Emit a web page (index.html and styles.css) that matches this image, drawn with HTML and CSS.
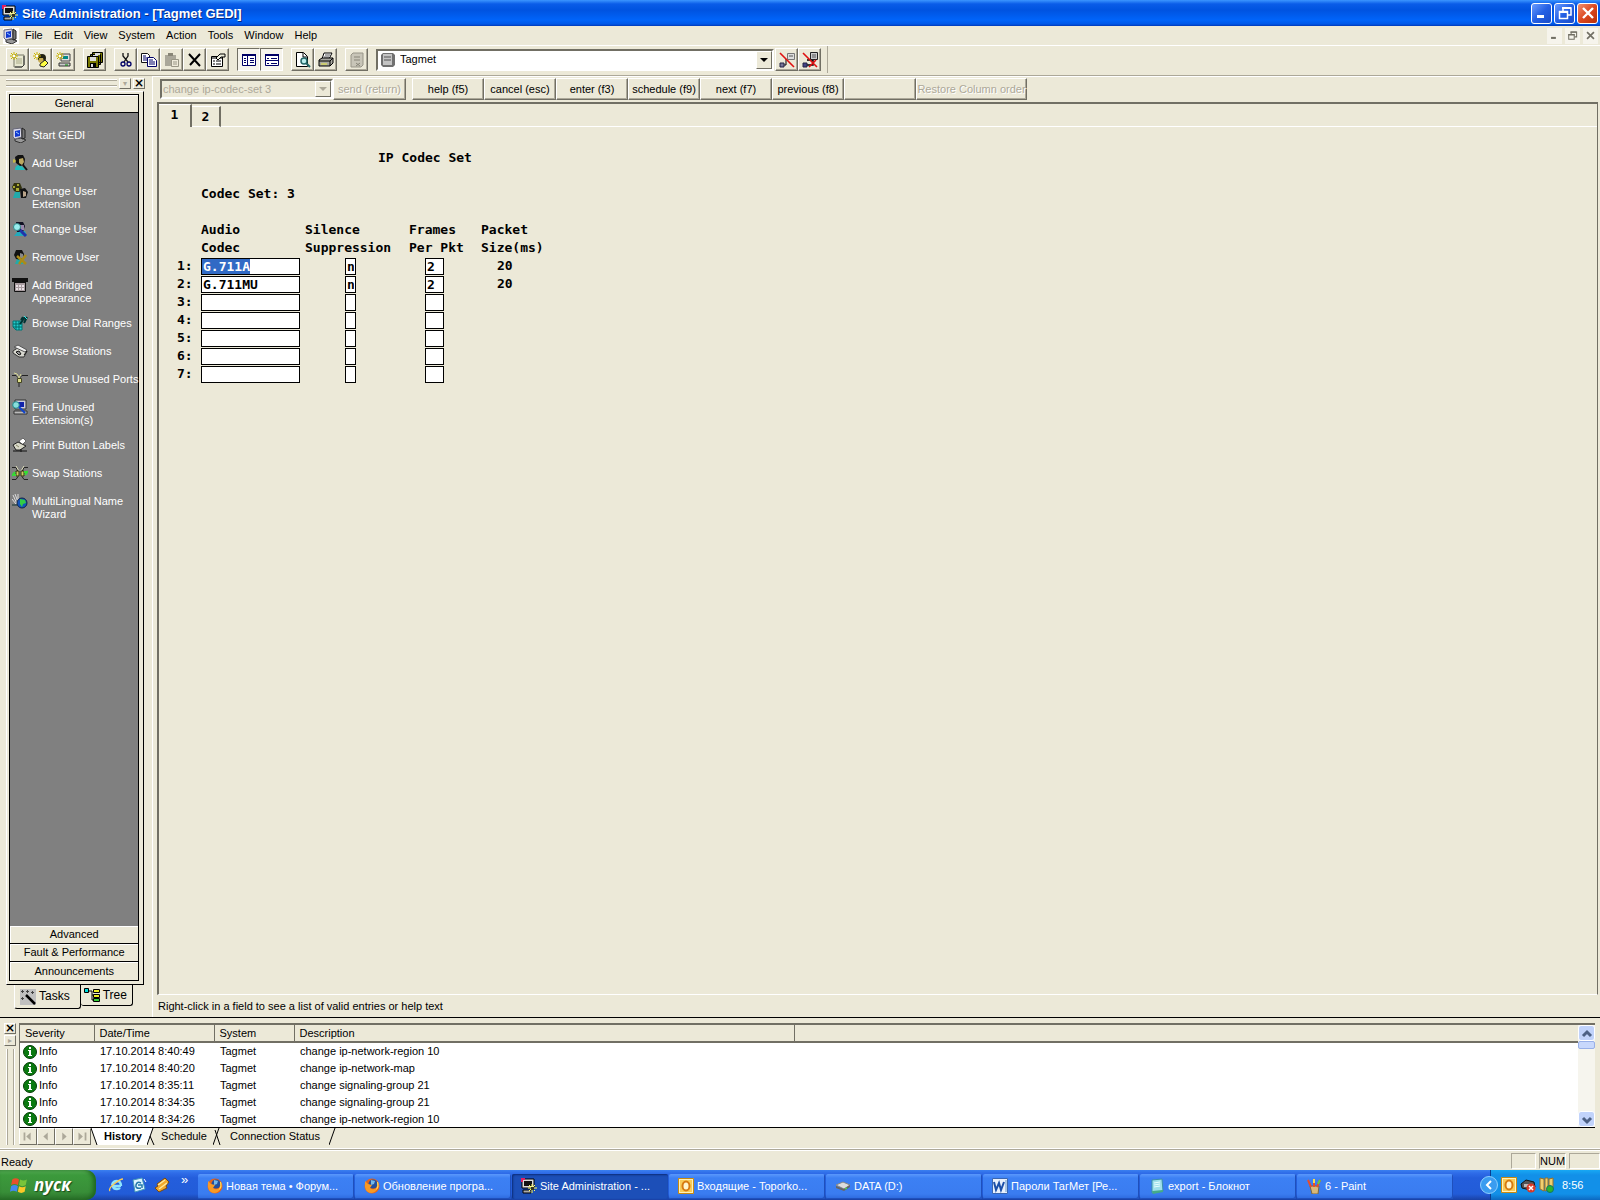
FILE: index.html
```html
<!DOCTYPE html>
<html lang="en">
<head>
<meta charset="utf-8">
<title>Site Administration - [Tagmet GEDI]</title>
<link rel="stylesheet" href="styles.css">
</head>
<body>
<svg class="defs" aria-hidden="true">
  <defs>
    <symbol id="pc" viewBox="0 0 16 16"><path d="M3 12l6-1 5 2-5 3-6-2z" fill="#999" stroke="#333"/><path d="M1 2l8-1 1 9-7 2-2-2z" fill="#d8d8e8" stroke="#667"/><path d="M3 4l5-1v6l-5 1z" fill="#1038d0"/><path d="M4 5l3 2" stroke="#9cf"/><path d="M10 1l3 2v8l-3 1z" fill="#777" stroke="#222"/></symbol>
    <symbol id="app" viewBox="0 0 16 16"><path d="M1 1h12v9H1z" fill="#ddd" stroke="#000"/><path d="M3 3h8v5H3z" fill="#111"/><path d="M0 0h4v2H2v2H0z" fill="#e02060"/><path d="M2 12h8v3H2z" fill="#aaa" stroke="#000"/><path d="M11 6v9M7 10h9M8 7l6 6M14 7l-6 6" stroke="#ff6"/><path d="M10 9h3v3h-3z" fill="#332"/></symbol>
    <symbol id="star" viewBox="0 0 16 16"><path d="M4 0v8M0 4h8M1 1l6 6M7 1L1 7" stroke="#c8b400"/><path d="M3 3h2v2H3z" fill="#fff"/></symbol>
    <symbol id="new1" viewBox="0 0 16 16"><path d="M4 3h10v10l-2 2H4z" fill="#e8e8d0" stroke="#776"/><path d="M6 7h6M6 9h6M6 11h6" stroke="#aa8"/><path d="M14 4v9l-2 2H5" fill="none" stroke="#333"/><use href="#star"/></symbol>
    <symbol id="new2" viewBox="0 0 16 16"><circle cx="9" cy="6" r="4" fill="#221"/><path d="M5 9l2-3h3l1 4-3 2z" fill="#c8ac50"/><path d="M7 12l5-4 3 3-4 4-4-1z" fill="#ff4" stroke="#222"/><use href="#star"/></symbol>
    <symbol id="new3" viewBox="0 0 16 16"><path d="M5 2h9v7H5z" fill="#ddd" stroke="#444"/><path d="M7 4h5v3H7z" fill="#088"/><path d="M3 11h11v3H3z" fill="#ccc" stroke="#333"/><path d="M9 13h3" stroke="#080"/><use href="#star"/></symbol>
    <symbol id="saveall" viewBox="0 0 16 16"><path d="M5.500.500h10v10h-10zM3.500 2.500h10v10h-10z" fill="#770" stroke="#000"/><path d="M.500 4.500h11v11H.500z" fill="#770" stroke="#000"/><path d="M3 5h6v4H3zM8 1h5v2H8zM6 3h5v1H6z" fill="#ddd"/><path d="M3 11h6v4H3z" fill="#000"/><path d="M4 12h2v3H4z" fill="#ddd"/></symbol>
    <symbol id="cut" viewBox="0 0 16 16"><path d="M5 1v3l5 6M10 1v3L6 10" fill="none" stroke="#111" stroke-width="1.300"/><circle cx="5" cy="12" r="2" fill="none" stroke="#006" stroke-width="1.300"/><circle cx="11" cy="12" r="2" fill="none" stroke="#006" stroke-width="1.300"/></symbol>
    <symbol id="copy" viewBox="0 0 16 16"><path d="M.500 1.500h6l2 2v7h-8z" fill="#fff" stroke="#111"/><path d="M6.500 5.500h6l3 3v6h-9z" fill="#fff" stroke="#006"/><path d="M2 4h3M2 6h4M2 8h4M8 8h4M8 10h6M8 12h6" stroke="#006"/></symbol>
    <symbol id="paste" viewBox="0 0 16 16"><path d="M1 3h11v11H1z" fill="#aaa79a"/><path d="M4 1h5v3H4z" fill="#888577"/><path d="M7.500 7.500h7v7h-7z" fill="#eeeada" stroke="#999686"/><path d="M9 10h4M9 12h4" stroke="#999686"/></symbol>
    <symbol id="del" viewBox="0 0 16 16"><path d="M2 2l11 12M13 2L3 13" stroke="#000" stroke-width="2"/></symbol>
    <symbol id="props" viewBox="0 0 16 16"><path d="M1.500 4.500h11v10h-11z" fill="#fff" stroke="#000"/><path d="M2 5h10v2H2z" fill="#777"/><path d="M3 9h2M6 9h5M3 12h2M6 12h5" stroke="#000"/><path d="M6 6l4-4h5v3h-4l-3 3z" fill="#eed" stroke="#000"/></symbol>
    <symbol id="view1" viewBox="0 0 16 16"><path d="M1.500 2.500h13v11h-13z" fill="#fff" stroke="#006"/><path d="M1 2h14v2H1zM6 2h1v11H6z" fill="#006"/><path d="M3 6.500h2M3 8.500h2M3 10.500h2M9 6.500h4M9 8.500h4M9 10.500h4" stroke="#006"/></symbol>
    <symbol id="view2" viewBox="0 0 16 16"><path d="M1.500 2.500h13v11h-13z" fill="#fff" stroke="#006"/><path d="M1 2h14v2H1zM1 8h14v1H1z" fill="#006"/><path d="M3 6.500h2M7 6.500h6M3 11.500h2M7 11.500h6" stroke="#006"/></symbol>
    <symbol id="preview" viewBox="0 0 16 16"><path d="M1.500.500h7l4 4v10h-11z" fill="#fff" stroke="#000"/><path d="M8 1v4h4" fill="none" stroke="#000"/><circle cx="9" cy="9" r="3" fill="#bee" stroke="#266" stroke-width="1.500"/><path d="M11 11l4 4" stroke="#266" stroke-width="2"/></symbol>
    <symbol id="print" viewBox="0 0 16 16"><path d="M6 1h8l-3 6H4z" fill="#fff" stroke="#000"/><path d="M7 3h5M6 5h5" stroke="#555"/><path d="M1 8l3-2h11v5l-3 3H1z" fill="#a8a8a0" stroke="#000"/><path d="M1 9h11v5M12 9l3-3" fill="none" stroke="#000"/><path d="M3 12h6" stroke="#ee4"/></symbol>
    <symbol id="sysoff" viewBox="0 0 16 16"><path d="M4 1h10v12l-2 2H2V3z" fill="#c8c5b8" stroke="#989588"/><path d="M5 5h6M5 8h6M7 11l4 3M7 14l4-3" stroke="#888578"/></symbol>
    <symbol id="server" viewBox="0 0 16 16"><path d="M3 1h10l2 2v10l-2 2H3l-2-2V3z" fill="#707070"/><path d="M3 2h9v11H3z" fill="#c4c4c4"/><path d="M4 5h7M4 8h7" stroke="#555"/></symbol>
    <symbol id="disc" viewBox="0 0 16 16"><path d="M3 13h4V7" fill="none" stroke="#000"/><path d="M8.500 1.500h7v6h-7z" fill="#ddd" stroke="#777"/><path d="M10 4h4" stroke="#555"/><path d="M1 11h4v4H1z" fill="#779" stroke="#224"/><path d="M1 1l13 13M14 14l1 1" stroke="#e01010" stroke-width="1.600"/></symbol>
    <symbol id="discall" viewBox="0 0 16 16"><path d="M4 13h7V8H5" fill="none" stroke="#000" stroke-width="1.500"/><path d="M8.500.500h7v7h-7z" fill="#ccc" stroke="#222"/><path d="M10 3h4M10 5h4" stroke="#555"/><path d="M1 11h4v4H1z" fill="#448" stroke="#224"/><path d="M1 1l14 14M14 8l-7 7" stroke="#e01010" stroke-width="1.600"/></symbol>
    <symbol id="head" viewBox="0 0 16 16"><path d="M3 15c0-4 2-5 5-5l4 3 1 2z" fill="#2bb"/><path d="M3 2l3-2h5l2 4-1 6-4 1-4-3z" fill="#111"/><path d="M7 4l4-1 1 4-2 3-3-2z" fill="#bca860"/><path d="M2 4v4M1 6h3" stroke="#dc3"/><path d="M11 10l4 5" stroke="#111" stroke-width="2"/></symbol>
    <symbol id="heads" viewBox="0 0 16 16"><path d="M2 0h6l2 5-3 5-5-2-2-4z" fill="#331"/><path d="M1 3h2v2H1zM5 1h2v2H5zM4 5h3v3H4z" fill="#aa3"/><path d="M1 15l2-6h5v6z" fill="#2aa"/><path d="M8 6l5-1 3 4-2 6H9z" fill="#111"/><path d="M11 8l3 1v4l-3 1z" fill="#b9a48a"/></symbol>
    <symbol id="heade" viewBox="0 0 16 16"><path d="M2 15l4-5h7l2 5z" fill="#2ab"/><path d="M4 1h7l2 4-2 6H5z" fill="#112"/><path d="M8 4h4v5H9z" fill="#98a"/><circle cx="5" cy="6" r="3.500" fill="#9ee" stroke="#388"/><path d="M8 9l6 6" stroke="#23a" stroke-width="3"/></symbol>
    <symbol id="headx" viewBox="0 0 16 16"><path d="M3 15l2-5h6v5z" fill="#2aa"/><path d="M4 1h6l2 4-2 6-6-1-2-4z" fill="#111"/><path d="M8 4l3 1v4l-3 1z" fill="#888"/><path d="M5 7l9 8M14 6l-7 9" stroke="#aa8b18" stroke-width="2.500"/></symbol>
    <symbol id="phone" viewBox="0 0 16 16"><path d="M0 1h16v4h-2V4H2v1H0z" fill="#111"/><path d="M2.500 4.500h11v10h-11z" fill="#a89ca0" stroke="#111"/><path d="M2 3h12v3H2z" fill="#111"/><path d="M4 8h2v2H4zM7 8h2v2H7zM10 8h2v2h-2zM4 11h2v2H4zM7 11h2v2H7zM10 11h2v2h-2z" fill="#e8e0e4"/></symbol>
    <symbol id="dial" viewBox="0 0 16 16"><path d="M1 6h9v9H4l-3-3z" fill="#2cc" stroke="#077"/><path d="M4 6v9M7 6v9M1 9h9M1 12h9" stroke="#066"/><path d="M8 9l5-7M9 5l2-3M12 8l3-6" stroke="#033" stroke-width="2"/><path d="M12 1l3 3" stroke="#3ee"/></symbol>
    <symbol id="desk" viewBox="0 0 16 16"><path d="M1 8l6-4 8 4-3 6H7l-6-4z" fill="#d8d8d0" stroke="#333"/><path d="M2 4l4-2 9 5-2 2z" fill="#eee" stroke="#555"/><path d="M4 9l3-1 2 3-2 1zM12 12l3-4" fill="#999" stroke="#111"/></symbol>
    <symbol id="plug" viewBox="0 0 16 16"><path d="M0 4.500h4l3 3 3-3h6" fill="none" stroke="#222"/><path d="M2 2l3 1 2 4 2-4" fill="none" stroke="#dd9"/><path d="M5.500 7.500h4v4h-4z" fill="#dd8" stroke="#442"/><path d="M7 12v4" stroke="#222"/></symbol>
    <symbol id="findpc" viewBox="0 0 16 16"><path d="M3 1h11v9H3z" fill="#ccd" stroke="#333"/><path d="M6 3h6v5H6z" fill="#12a"/><path d="M2 12h13v3H2z" fill="#bbb" stroke="#333"/><circle cx="4" cy="6" r="3.300" fill="#8dd" stroke="#288"/><path d="M7 8l6 6" stroke="#14c" stroke-width="2"/></symbol>
    <symbol id="label" viewBox="0 0 16 16"><path d="M7 4l4-3 3 3-4 4z" fill="#fff" stroke="#666"/><path d="M1 8l5-3 8 4-6 4H4z" fill="#d8d8c8" stroke="#222"/><path d="M1 14h14M9 12v3" stroke="#111"/><path d="M4 8l3 2" stroke="#886"/></symbol>
    <symbol id="swap" viewBox="0 0 16 16"><path d="M0 2.500h4l2 4M16 2.500h-4l-2 4M0 14.500h4l2-3M16 14.500h-4l-2-3" fill="none" stroke="#222"/><path d="M4 1l3 5M12 1L9 6" stroke="#ddb"/><path d="M4 6h3v5H4zM9 6h3v5H9z" fill="#cc6" stroke="#331"/><path d="M0 11l3-4M13 10l3-4M2 10h2M12 7h3" fill="none" stroke="#3d3" stroke-width="2"/></symbol>
    <symbol id="globe" viewBox="0 0 16 16"><path d="M1 2l4 9M3 1l3 8M6 1v6M0 6l4 5" stroke="#ddd"/><circle cx="10" cy="10" r="5" fill="#15b" stroke="#124"/><path d="M8 6l5 1 1 3-3 1-1 3-2-3z" fill="#3c4"/><path d="M0 12h5" stroke="#133"/></symbol>
    <symbol id="wand" viewBox="0 0 16 16"><path d="M0 0h16v16H0z" fill="#c0c0c0"/><path d="M6 6l9 9" stroke="#000" stroke-width="2.500"/><path d="M2.500 1v3M1 2.500h3M7.500 1v3M6 2.500h3M12.500 2v3M11 3.500h3M2.500 8v3M1 9.500h3" stroke="#444"/></symbol>
    <symbol id="tree" viewBox="0 0 16 16"><path d="M.500 1.500h4v4h-4z" fill="#0dd" stroke="#000"/><path d="M5 4h3v9h3M8 8h3" fill="none" stroke="#000"/><path d="M9.500 2.500h6v3h-6zM9.500 7.500h6v3h-6z" fill="#ee2" stroke="#000"/><path d="M9.500 11.500h6v3h-6z" fill="#3c3" stroke="#000"/></symbol>
    <symbol id="info" viewBox="0 0 16 16"><circle cx="8" cy="8" r="6.500" fill="#0a7a10" stroke="#043c06"/><path d="M7 3h2v2H7zM6 6h3v5h1v1H6v-1h1V7H6z" fill="#fff"/></symbol>
    <symbol id="win" viewBox="0 0 16 16"><path d="M2 3q3-2 6 0L7 8Q4 6 1 8z" fill="#e8502a"/><path d="M9 3q3 2 6 0l-1 5q-3 2-6 0z" fill="#78c43a"/><path d="M1 9q3-2 6 0l-1 5q-3-2-6 0z" fill="#4488f0"/><path d="M8 9q3 2 6 0l-1 5q-3 2-6 0z" fill="#fcc828"/></symbol>
    <symbol id="ie" viewBox="0 0 16 16"><path d="M13 9H5q0 3 4 3 2 0 3-1M4 8q1-4 5-4t4 5" fill="none" stroke="#8ce4ff" stroke-width="2.400"/><path d="M2 14q-2-2 4-7t9-5" fill="none" stroke="#fc5" stroke-width="1.300"/></symbol>
    <symbol id="outexp" viewBox="0 0 16 16"><path d="M2 3l9-2 3 11-10 3z" fill="#dff4ff" stroke="#49b"/><path d="M10 6q-4-2-5 2t5 3M7 8h4v3" fill="none" stroke="#27a" stroke-width="1.500"/><path d="M13 2l2 3" stroke="#fff"/></symbol>
    <symbol id="winamp" viewBox="0 0 16 16"><path d="M3 7l8-6 4 4-3 4 1 2-8 4-4-4 3-2z" fill="#f0a82c" stroke="#7a4810"/><path d="M4 8l7-5M5 12l8-6" stroke="#ffe89a" stroke-width="1.500"/></symbol>
    <symbol id="ff" viewBox="0 0 16 16"><circle cx="8" cy="8" r="7.500" fill="#e8641a"/><circle cx="9" cy="6" r="4.500" fill="#234f9c"/><path d="M7 2l4 1-1 3-3 1z" fill="#74b8e8"/><path d="M1 3l3 3 4 1-2 3q3 3 8-1-1 5-6 6-6 0-7-6z" fill="#f89a24"/><path d="M14 4q2 5-2 8 2-4 1-8z" fill="#fd5"/></symbol>
    <symbol id="outlook" viewBox="0 0 16 16"><path d="M.500.500h15v15H.500z" fill="#fff0b8" stroke="#c88a10"/><path d="M2 2h12v12H2z" fill="#f8cc58"/><ellipse cx="8" cy="8" rx="3.500" ry="4.500" fill="#fff6cc" stroke="#d67a10" stroke-width="2"/></symbol>
    <symbol id="drive" viewBox="0 0 16 16"><path d="M1 7l7-3 7 3-6 4z" fill="#ddd" stroke="#888"/><path d="M1 8l8 3v2l-8-3zM9 11l6-4v2l-6 4z" fill="#666"/><path d="M10 11l2-1" stroke="#4f4"/></symbol>
    <symbol id="word" viewBox="0 0 16 16"><path d="M.500.500h15v15H.500z" fill="#e8f0fc" stroke="#3a66b0"/><path d="M2 4l2 8 3-7 2 7 3-8" fill="none" stroke="#1b4fa8" stroke-width="2"/><path d="M14 2v12" stroke="#69c"/></symbol>
    <symbol id="note" viewBox="0 0 16 16"><path d="M3 2l10-1 1 12-11 2z" fill="#9fe0ea" stroke="#3a8fa8"/><path d="M5 5l6-1M5 7l6-1M5 9l6-1" stroke="#e8ffff"/><path d="M3 13l11-1v2L4 16z" fill="#4a8"/></symbol>
    <symbol id="paint" viewBox="0 0 16 16"><path d="M4 8h9l-1 8H6z" fill="#d8b878" stroke="#764"/><path d="M5 9L2 2M8 9V1M11 9l3-7" stroke="#e84c2c" stroke-width="2"/><path d="M8 5V1" stroke="#fd4" stroke-width="2"/><path d="M12 6l2-4" stroke="#6c4" stroke-width="2"/></symbol>
    <symbol id="netx" viewBox="0 0 16 16"><path d="M1 7l5-4 8 2 1 5-5 3-8-2z" fill="#555" stroke="#111"/><path d="M4 7h6v3H4z" fill="#bbb"/><circle cx="11" cy="11" r="4.500" fill="#d83a28"/><path d="M9 9l4 4M13 9l-4 4" stroke="#fff" stroke-width="1.500"/></symbol>
    <symbol id="books" viewBox="0 0 16 16"><path d="M1 1l4 1v12l-4-2zM6 1h3v12l-3 1zM10 2l4-1v11l-4 2z" fill="#f0cf70" stroke="#96702a"/><circle cx="11" cy="12" r="3.500" fill="#2db42d" stroke="#176"/></symbol>
    <symbol id="up" viewBox="0 0 16 16"><path d="M4 10l4-4 4 4" fill="none" stroke="#4d6185" stroke-width="3"/></symbol>
    <symbol id="down" viewBox="0 0 16 16"><path d="M4 6l4 4 4-4" fill="none" stroke="#4d6185" stroke-width="3"/></symbol>
    <symbol id="min" viewBox="0 0 16 16"><path d="M3 10h7v3H3z" fill="currentColor"/></symbol>
    <symbol id="restore" viewBox="0 0 16 16"><path d="M6 6V3h8v7h-3" fill="none" stroke="currentColor" stroke-width="1.500"/><path d="M2.500 6.500h8v7h-8z" fill="none" stroke="currentColor" stroke-width="1.500"/><path d="M5 3h9M2 7h9" stroke="currentColor" stroke-width="2"/></symbol>
    <symbol id="close" viewBox="0 0 16 16"><path d="M3 3l10 10M13 3L3 13" stroke="currentColor" stroke-width="2.400"/></symbol>
  </defs>
</svg>

<header class="titlebar">
  <svg class="icon"><use href="#app"/></svg>
  <h1>Site Administration - [Tagmet GEDI]</h1>
  <button class="winbtn" aria-label="Minimize"><svg class="icon"><use href="#min"/></svg></button>
  <button class="winbtn" aria-label="Restore"><svg class="icon"><use href="#restore"/></svg></button>
  <button class="winbtn danger" aria-label="Close"><svg class="icon"><use href="#close"/></svg></button>
</header>

<nav class="menubar" aria-label="Main menu">
  <svg class="icon docicon"><use href="#pc"/></svg>
  <button>File</button><button>Edit</button><button>View</button><button>System</button><button>Action</button><button>Tools</button><button>Window</button><button>Help</button>
  <div class="mdi">
    <button aria-label="Minimize document"><svg class="icon"><use href="#min"/></svg></button>
    <button aria-label="Restore document"><svg class="icon"><use href="#restore"/></svg></button>
    <button aria-label="Close document"><svg class="icon"><use href="#close"/></svg></button>
  </div>
</nav>

<div class="toolbar">
  <div class="group">
    <button aria-label="New task"><svg class="icon"><use href="#new1"/></svg></button>
    <button aria-label="New user"><svg class="icon"><use href="#new2"/></svg></button>
    <button aria-label="New system"><svg class="icon"><use href="#new3"/></svg></button>
  </div>
  <div class="group"><button aria-label="Save all"><svg class="icon"><use href="#saveall"/></svg></button></div>
  <div class="group">
    <button aria-label="Cut"><svg class="icon"><use href="#cut"/></svg></button>
    <button aria-label="Copy"><svg class="icon"><use href="#copy"/></svg></button>
    <button aria-label="Paste" disabled><svg class="icon"><use href="#paste"/></svg></button>
    <button aria-label="Delete"><svg class="icon"><use href="#del"/></svg></button>
    <button aria-label="Properties"><svg class="icon"><use href="#props"/></svg></button>
  </div>
  <div class="group">
    <button class="on" aria-label="Task pane"><svg class="icon"><use href="#view1"/></svg></button>
    <button class="on" aria-label="History pane"><svg class="icon"><use href="#view2"/></svg></button>
  </div>
  <div class="group">
    <button aria-label="Print preview"><svg class="icon"><use href="#preview"/></svg></button>
    <button aria-label="Print"><svg class="icon"><use href="#print"/></svg></button>
  </div>
  <div class="group"><button aria-label="Disconnect" disabled><svg class="icon"><use href="#sysoff"/></svg></button></div>
  <div class="combo system">
    <svg class="icon"><use href="#server"/></svg>
    <select aria-label="System"><option>Tagmet</option></select>
    <span class="drop"></span>
  </div>
  <div class="group last">
    <button aria-label="Drop connection"><svg class="icon"><use href="#disc"/></svg></button>
    <button aria-label="Drop all connections"><svg class="icon"><use href="#discall"/></svg></button>
  </div>
</div>

<div class="work">
  <aside class="side">
    <div class="grip"><span class="bars"></span><button class="tiny off" aria-label="Collapse">▾</button><button class="tiny" aria-label="Close pane">×</button></div>
    <div class="outer">
      <div class="accordion">
        <button class="head">General</button>
        <ul class="tasks">
          <li><svg class="icon"><use href="#pc"/></svg><a href="#">Start GEDI</a></li>
          <li><svg class="icon"><use href="#head"/></svg><a href="#">Add User</a></li>
          <li><svg class="icon"><use href="#heads"/></svg><a href="#">Change User<br>Extension</a></li>
          <li><svg class="icon"><use href="#heade"/></svg><a href="#">Change User</a></li>
          <li><svg class="icon"><use href="#headx"/></svg><a href="#">Remove User</a></li>
          <li><svg class="icon"><use href="#phone"/></svg><a href="#">Add Bridged<br>Appearance</a></li>
          <li><svg class="icon"><use href="#dial"/></svg><a href="#">Browse Dial Ranges</a></li>
          <li><svg class="icon"><use href="#desk"/></svg><a href="#">Browse Stations</a></li>
          <li><svg class="icon"><use href="#plug"/></svg><a href="#">Browse Unused Ports</a></li>
          <li><svg class="icon"><use href="#findpc"/></svg><a href="#">Find Unused<br>Extension(s)</a></li>
          <li><svg class="icon"><use href="#label"/></svg><a href="#">Print Button Labels</a></li>
          <li><svg class="icon"><use href="#swap"/></svg><a href="#">Swap Stations</a></li>
          <li><svg class="icon"><use href="#globe"/></svg><a href="#">MultiLingual Name<br>Wizard</a></li>
        </ul>
        <button class="head">Advanced</button>
        <button class="head">Fault &amp; Performance</button>
        <button class="head">Announcements</button>
      </div>
    </div>
    <div class="sidetabs">
      <button class="current"><svg class="icon"><use href="#wand"/></svg>Tasks</button>
      <button><svg class="icon"><use href="#tree"/></svg>Tree</button>
    </div>
  </aside>

  <main class="doc">
    <div class="cmdbar">
      <div class="combo command">
        <select aria-label="Command" disabled><option>change ip-codec-set 3</option></select>
        <span class="drop"></span>
      </div>
      <button class="send" disabled>send (return)</button>
      <button>help (f5)</button><button>cancel (esc)</button><button>enter (f3)</button><button>schedule (f9)</button><button>next (f7)</button><button>previous (f8)</button><button aria-label="Unassigned"></button>
      <button class="restore" disabled>Restore Column order</button>
    </div>
    <section class="sheet">
      <div class="pages"><button class="current">1</button><button>2</button><span class="rest"></span></div>
      <form class="term">
        <h2>IP Codec Set</h2>
        <p>Codec Set: 3</p>
        <table class="codecs">
          <thead><tr><th class="num"></th><th class="audio">Audio<br>Codec</th><th class="audio">Silence<br>Suppression</th><th class="frames">Frames<br>Per Pkt</th><th class="size">Packet<br>Size(ms)</th></tr></thead>
          <tbody>
            <tr><th>1:</th><td><input class="codec picked" aria-label="Audio codec 1" value="G.711A"></td><td class="in5"><input class="flag" aria-label="Silence suppression 1" value="n"></td><td class="in2"><input class="count" aria-label="Frames per packet 1" value="2"></td><td class="in2">20</td></tr>
            <tr><th>2:</th><td><input class="codec" aria-label="Audio codec 2" value="G.711MU"></td><td class="in5"><input class="flag" aria-label="Silence suppression 2" value="n"></td><td class="in2"><input class="count" aria-label="Frames per packet 2" value="2"></td><td class="in2">20</td></tr>
            <tr><th>3:</th><td><input class="codec" aria-label="Audio codec 3"></td><td class="in5"><input class="flag" aria-label="Silence suppression 3"></td><td class="in2"><input class="count" aria-label="Frames per packet 3"></td><td></td></tr>
            <tr><th>4:</th><td><input class="codec" aria-label="Audio codec 4"></td><td class="in5"><input class="flag" aria-label="Silence suppression 4"></td><td class="in2"><input class="count" aria-label="Frames per packet 4"></td><td></td></tr>
            <tr><th>5:</th><td><input class="codec" aria-label="Audio codec 5"></td><td class="in5"><input class="flag" aria-label="Silence suppression 5"></td><td class="in2"><input class="count" aria-label="Frames per packet 5"></td><td></td></tr>
            <tr><th>6:</th><td><input class="codec" aria-label="Audio codec 6"></td><td class="in5"><input class="flag" aria-label="Silence suppression 6"></td><td class="in2"><input class="count" aria-label="Frames per packet 6"></td><td></td></tr>
            <tr><th>7:</th><td><input class="codec" aria-label="Audio codec 7"></td><td class="in5"><input class="flag" aria-label="Silence suppression 7"></td><td class="in2"><input class="count" aria-label="Frames per packet 7"></td><td></td></tr>
          </tbody>
        </table>
      </form>
    </section>
    <p class="hint">Right-click in a field to see a list of valid entries or help text</p>
  </main>
</div>

<section class="log">
  <div class="vgrip"><button class="tiny" aria-label="Close log">×</button><button class="tiny off" aria-label="Expand log">▸</button><span class="vbars"></span></div>
  <div class="logmain">
    <div class="list">
      <table>
        <thead><tr><th class="c1">Severity</th><th class="c2">Date/Time</th><th class="c3">System</th><th class="c4">Description</th><th></th></tr></thead>
        <tbody>
          <tr><td><span class="sev"><svg class="icon"><use href="#info"/></svg>Info</span></td><td>17.10.2014 8:40:49</td><td>Tagmet</td><td>change ip-network-region 10</td><td></td></tr>
          <tr><td><span class="sev"><svg class="icon"><use href="#info"/></svg>Info</span></td><td>17.10.2014 8:40:20</td><td>Tagmet</td><td>change ip-network-map</td><td></td></tr>
          <tr><td><span class="sev"><svg class="icon"><use href="#info"/></svg>Info</span></td><td>17.10.2014 8:35:11</td><td>Tagmet</td><td>change signaling-group 21</td><td></td></tr>
          <tr><td><span class="sev"><svg class="icon"><use href="#info"/></svg>Info</span></td><td>17.10.2014 8:34:35</td><td>Tagmet</td><td>change signaling-group 21</td><td></td></tr>
          <tr><td><span class="sev"><svg class="icon"><use href="#info"/></svg>Info</span></td><td>17.10.2014 8:34:26</td><td>Tagmet</td><td>change ip-network-region 10</td><td></td></tr>
        </tbody>
      </table>
      <div class="scroll">
        <button aria-label="Scroll up"><svg class="icon"><use href="#up"/></svg></button>
        <span class="thumb"></span>
        <button class="end" aria-label="Scroll down"><svg class="icon"><use href="#down"/></svg></button>
      </div>
    </div>
    <div class="logtabs">
      <button class="nav" aria-label="First tab" disabled><svg viewBox="0 0 18 17"><path d="M4 4h2v9H4zM12 4v9L7 8.500z"/></svg></button>
      <button class="nav" aria-label="Previous tab" disabled><svg viewBox="0 0 18 17"><path d="M11 4v9L6 8.500z"/></svg></button>
      <button class="nav" aria-label="Next tab" disabled><svg viewBox="0 0 18 17"><path d="M7 4v9l5-4.500z"/></svg></button>
      <button class="nav" aria-label="Last tab" disabled><svg viewBox="0 0 18 17"><path d="M5 4v9l5-4.500zM12 4h2v9h-2z"/></svg></button>
      <svg class="slant" viewBox="0 0 8 17"><path d="M0 0l6 17h2V0z" fill="#fff"/><path d="M0 0l6 17" stroke="#000"/></svg>
      <button class="current">History</button>
      <svg class="slant" viewBox="0 0 8 17"><path d="M0 0h6L0 17z" fill="#fff"/><path d="M6 0L0 17M3 8l4 9" stroke="#000"/></svg>
      <button class="second">Schedule</button>
      <svg class="slant" viewBox="0 0 8 17"><path d="M6 0L0 17M2 2l5 15" stroke="#000"/></svg>
      <button class="third">Connection Status</button>
      <svg class="slant" viewBox="0 0 8 17"><path d="M6 0L0 17" stroke="#000"/></svg>
    </div>
  </div>
</section>

<div class="status"><span class="msg">Ready</span><span class="cell"></span><span class="cell mid">NUM</span><span class="cell wide"></span></div>

<footer class="taskbar">
  <button class="start"><svg class="icon"><use href="#win"/></svg>пуск</button>
  <div class="quick">
    <svg class="icon"><use href="#ie"/></svg><svg class="icon"><use href="#outexp"/></svg><svg class="icon"><use href="#winamp"/></svg><span class="more">»</span>
  </div>
  <div class="apps">
    <button><svg class="icon"><use href="#ff"/></svg>Новая тема • Форум...</button>
    <button><svg class="icon"><use href="#ff"/></svg>Обновление програ...</button>
    <button class="active"><svg class="icon"><use href="#app"/></svg>Site Administration - ...</button>
    <button><svg class="icon"><use href="#outlook"/></svg>Входящие - Toporko...</button>
    <button><svg class="icon"><use href="#drive"/></svg>DATA (D:)</button>
    <button><svg class="icon"><use href="#word"/></svg>Пароли ТагМет [Ре...</button>
    <button><svg class="icon"><use href="#note"/></svg>export - Блокнот</button>
    <button><svg class="icon"><use href="#paint"/></svg>6 - Paint</button>
  </div>
  <div class="tray">
    <button class="chev" aria-label="Show hidden icons"><svg viewBox="0 0 18 18"><circle cx="9" cy="9" r="8.500" fill="#3a9cf0" stroke="#8cd0ff"/><path d="M11 5L7 9l4 4" fill="none" stroke="#fff" stroke-width="2"/></svg></button>
    <svg class="icon"><use href="#outlook"/></svg><svg class="icon"><use href="#netx"/></svg><svg class="icon"><use href="#books"/></svg>
    <time>8:56</time>
  </div>
</footer>
</body>
</html>
```
FILE: styles.css
```css
:root {
  --face: #ece9d8;
  --shade: #aca899;
  --dark: #716f64;
  --light: #ffffff;
}
* { box-sizing: border-box; }
body {
  margin: 0;
  min-height: 100vh;
  display: flex;
  flex-direction: column;
  background: var(--face);
  color: #000;
  font: 11px/13px "Liberation Sans", Arial, sans-serif;
}
button, input, select { font: inherit; color: inherit; }
button {
  margin: 0;
  padding: 0;
  border: 0;
  background: none;
  white-space: nowrap;
}
h1, h2, p, ul { margin: 0; padding: 0; font-size: inherit; }
svg { display: block; flex: none; }
.defs { position: absolute; width: 0; height: 0; }
.icon { width: 16px; height: 16px; }

.titlebar {
  display: flex;
  align-items: center;
  gap: 2px;
  height: 26px;
  padding: 0 2px;
  background: linear-gradient(#3c96ff 0, #0a5ce8 4px, #0053e0 10px, #0064fa 20px, #0058e8 24px, #0038b8 26px);
  color: #fff;
}
.titlebar h1 {
  flex: 1;
  padding: 1px 0 0 2px;
  font: bold 13px/16px "Liberation Sans", Arial, sans-serif;
  text-shadow: 1px 1px 0 #0a2a80;
}
.winbtn {
  display: grid;
  place-items: center;
  width: 21px;
  height: 21px;
  border: 1px solid #fff;
  border-radius: 3px;
  background: linear-gradient(135deg, #6a9cff, #2460e4 50%, #1a4cc8);
}
.winbtn.danger { background: linear-gradient(135deg, #f09070, #dc4820 50%, #b83008); }

.menubar { display: flex; align-items: center; height: 19px; padding-left: 3px; }
.menubar > button { padding: 0 5px 2px 6px; line-height: 16px; }
.docicon { background: #fff; }
.mdi { display: flex; gap: 3px; margin-left: auto; padding-right: 2px; color: var(--dark); }
.mdi button { display: grid; place-items: center; width: 15px; height: 16px; background: #f6f4ec; }
.mdi .icon { width: 11px; height: 11px; }

.toolbar {
  display: flex;
  align-items: center;
  gap: 8px;
  height: 31px;
  padding: 0 6px 2px;
  border-top: 1px solid #fff;
  border-bottom: 1px solid var(--shade);
}
.group { display: flex; }
.group button {
  display: grid;
  place-items: center;
  width: 23px;
  height: 23px;
  border: 1px solid;
  border-color: #fff var(--dark) var(--dark) #fff;
  box-shadow: inset -1px -1px var(--shade);
}
.group .on { border-color: var(--dark) #fff #fff var(--dark); box-shadow: none; background: #f6f4ec; }
.group.last { align-self: stretch; align-items: center; margin-left: -7px; padding-right: 6px; border-right: 1px solid var(--shade); }
.combo {
  display: flex;
  align-items: center;
  border: 2px solid;
  border-color: var(--dark) #fff #fff var(--dark);
  background: #fff;
}
.combo select { flex: 1; min-width: 0; padding: 0; border: 0; background: none; appearance: none; opacity: 1; }
.combo.system { width: 398px; height: 22px; padding-left: 2px; gap: 4px; }
.drop {
  display: grid;
  place-items: center;
  align-self: stretch;
  width: 16px;
  border: 1px solid;
  border-color: #fff var(--dark) var(--dark) #fff;
  background: var(--face);
}
.drop::after { content: ""; border: 4px solid transparent; border-top-color: #000; border-bottom: 0; }

.work { display: flex; flex: 1; min-height: 0; }
.side { display: flex; flex-direction: column; width: 153px; padding: 1px 7px 8px 6px; border-right: 1px solid #fff; }
.grip { display: flex; align-items: center; gap: 2px; height: 14px; padding-bottom: 2px; }
.bars { flex: 1; height: 6px; border: solid var(--shade); border-width: 1px 0; box-shadow: 0 -1px #fff, 0 1px #fff; }
.tiny {
  width: 12px;
  height: 11px;
  border: 1px solid;
  border-color: #fff var(--dark) var(--dark) #fff;
  font: bold 12px/9px "DejaVu Sans", sans-serif;
}
.tiny.off { color: var(--shade); font-size: 8px; }
.outer {
  display: flex;
  flex: 1;
  margin-right: 1px;
  padding: 2px 4px 3px 2px;
  border: 1px solid;
  border-color: #fff #000 #000 #fff;
}
.accordion { display: flex; flex: 1; flex-direction: column; border: 1px solid #000; background: #808080; }
.head { height: 18px; border-bottom: 1px solid #000; background: var(--face); box-shadow: inset 1px 1px #fff; text-align: center; }
.head:last-child { border-bottom: 0; }
.tasks { display: flex; flex: 1; flex-direction: column; gap: 10px; padding: 14px 0 0 2px; list-style: none; }
.tasks li { display: flex; gap: 4px; min-height: 18px; }
.tasks a { padding-top: 2px; color: #fff; text-decoration: none; white-space: nowrap; }
.sidetabs { display: flex; align-items: flex-start; padding-left: 8px; }
.sidetabs button {
  display: flex;
  align-items: center;
  gap: 3px;
  height: 21px;
  padding: 0 5px 0 3px;
  border: solid #000;
  border-width: 0 1px 1px 0;
  border-radius: 0 0 3px 3px;
  font-size: 12px;
}
.sidetabs .current { height: 24px; padding: 0 10px 0 5px; border-left: 1px solid #fff; }

.doc { display: flex; flex: 1; flex-direction: column; min-width: 0; padding: 0 2px 0 4px; border-top: 1px solid #fff; }
.cmdbar { display: flex; padding: 1px 0 2px 3px; }
.cmdbar button {
  width: 72px;
  height: 22px;
  border: 1px solid;
  border-color: #fff var(--dark) var(--dark) #fff;
  box-shadow: inset -1px -1px var(--shade);
}
.cmdbar button:disabled { color: var(--shade); text-shadow: 1px 1px #fff; }
.cmdbar .send { width: 73px; margin-right: 6px; }
.cmdbar .restore { width: 111px; }
.combo.command { width: 173px; height: 20px; margin-top: 1px; padding-left: 1px; background: var(--face); color: var(--shade); }
.combo.command select { color: var(--shade); }
.combo.command .drop::after { border-top-color: var(--shade); }

.sheet { display: flex; flex: 1; flex-direction: column; border: 2px solid; border-width: 2px 1px 1px 2px; border-color: var(--dark) var(--dark) #fff var(--dark); }
.pages { display: flex; align-items: flex-end; height: 23px; font: bold 13px/16px "DejaVu Sans Mono", monospace; }
.pages button { width: 29px; height: 21px; border: solid; border-width: 1px 2px 1px 0; border-color: #fff var(--dark) #fff #fff; }
.pages .current { width: 33px; height: 23px; padding-bottom: 2px; border-bottom: 0; }
.rest { flex: 1; border-bottom: 1px solid #fff; }
.term { padding: 22px 0 0 18px; font: bold 13px/18px "DejaVu Sans Mono", monospace; }
.term h2 { margin-left: 201px; }
.term p { margin: 18px 0 18px 24px; }
.codecs { border-collapse: collapse; table-layout: fixed; width: 370px; }
.codecs th, .codecs td { height: 18px; padding: 0; text-align: left; vertical-align: bottom; white-space: nowrap; }
.codecs .num { width: 24px; }
.codecs .audio { width: 104px; }
.codecs .frames { width: 72px; }
.codecs .size { width: 66px; }
.codecs .in5 { padding-left: 40px; }
.codecs .in2 { padding-left: 16px; }
.codecs input { display: block; height: 17px; margin-top: 1px; padding: 0 1px; border: 1px solid #000; border-radius: 0; background: #fff; outline: 0; }
.codecs .codec { width: 99px; }
.codecs .flag { width: 11px; }
.codecs .count { width: 19px; }
.codecs .picked { background: linear-gradient(90deg, #316ac5 48px, #fff 48px); color: #fff; }
.hint { padding: 5px 0 4px 1px; }

.log { display: flex; border-top: 1px solid #000; padding: 5px 5px 3px 4px; border-bottom: 1px solid #fff; }
.vgrip { display: flex; flex-direction: column; gap: 1px; width: 15px; }
.vbars { flex: 1; width: 7px; margin: 2px 0 0 3px; border: solid var(--shade); border-width: 0 1px; box-shadow: 1px 0 #fff, -1px 0 #fff; }
.logmain { flex: 1; min-width: 0; }
.list { display: flex; border: solid var(--dark); border-width: 2px 0 0 1px; border-bottom: 1px solid #000; background: #fff; }
.list table { flex: 1; border-collapse: collapse; table-layout: fixed; width: 100%; }
.list th { height: 17px; padding: 0 5px; border-right: 1px solid var(--dark); border-bottom: 2px solid var(--dark); background: var(--face); text-align: left; font-weight: normal; }
.list th:last-child { border-right: 0; }
.list td { height: 17px; padding: 0 6px; }
.list td:first-child { padding: 0 2px; }
.list .c1 { width: 74px; }
.list .c2 { width: 120px; }
.list .c3 { width: 80px; }
.list .c4 { width: 500px; }
.list tbody tr:first-child td { height: 18px; }
.list tbody tr:last-child td { height: 16px; }
.sev { display: flex; align-items: center; gap: 1px; }
.scroll { display: flex; flex-direction: column; width: 17px; background: #f6f5ee; }
.scroll button { display: grid; place-items: center; height: 16px; border: 1px solid #fff; border-radius: 3px; background: #c1d3fb; }
.scroll .end { margin-top: auto; }
.scroll .thumb { height: 8px; border: 1px solid #98b0e8; border-radius: 2px; background: #c8d8fc; }
.logtabs { display: flex; height: 17px; }
.logtabs .nav { width: 18px; border: 1px solid; border-color: #fff var(--dark) var(--dark) #fff; fill: var(--shade); }
.logtabs .nav svg { width: 16px; height: 15px; }
.slant { width: 8px; height: 17px; fill: none; }
.logtabs .current { width: 48px; background: #fff; font-weight: bold; }
.logtabs .second { width: 58px; }
.logtabs .third { width: 108px; }

.status { display: flex; gap: 3px; height: 21px; border-top: 1px solid var(--shade); box-shadow: inset 0 1px #fff; padding: 3px 0 1px 1px; }
.msg { flex: 1; line-height: 18px; }
.cell { width: 25px; border: 1px solid; border-color: var(--shade) #fff #fff var(--shade); line-height: 15px; text-align: center; }
.cell.mid { width: 27px; }
.cell.wide { width: 31px; }

.taskbar { display: flex; height: 30px; background: linear-gradient(#3a80f0 0, #2f6ce8 3px, #245edc 8px, #225cd8 24px, #1941a5 30px); color: #fff; }
.start {
  display: flex;
  align-items: center;
  gap: 6px;
  width: 96px;
  padding-left: 10px;
  border-radius: 0 10px 10px 0;
  background: linear-gradient(#5cb45c 0, #3c9a3c 5px, #388e38 22px, #2a702a 30px);
  box-shadow: inset -3px 0 4px #1f661f;
  font: italic bold 17px/20px "Open Sans", "Noto Sans", sans-serif;
  text-shadow: 1px 1px 1px #1a4a1a;
}
.start .icon { width: 18px; height: 18px; }
.quick { display: flex; align-items: center; gap: 7px; width: 102px; padding-left: 12px; }
.more { align-self: flex-start; padding: 3px 0 0 4px; font-size: 13px; }
.apps { display: flex; flex: 1; min-width: 0; align-items: center; gap: 1px; padding-top: 2px; }
.apps button {
  display: flex;
  align-items: center;
  gap: 3px;
  flex: 0 1 156px;
  min-width: 0;
  height: 25px;
  padding-left: 9px;
  overflow: hidden;
  border-radius: 2px;
  background: linear-gradient(#5a98fc, #3c80f4 4px, #3a7cf0 20px, #2c68dc);
  box-shadow: inset -1px -1px #1f50bc;
}
.apps .active { background: #1c4fb8; box-shadow: inset 1px 1px 2px #0c2c78; }
.tray {
  display: flex;
  align-items: center;
  gap: 3px;
  width: 110px;
  background: linear-gradient(#18a8f4 0, #1290e8 5px, #1290e8 24px, #0c68c0 30px);
  border-left: 1px solid #0a3c90;
}
.tray .chev { margin-left: -11px; }
.chev svg { width: 18px; height: 18px; }
.tray time { padding-left: 4px; }
```
